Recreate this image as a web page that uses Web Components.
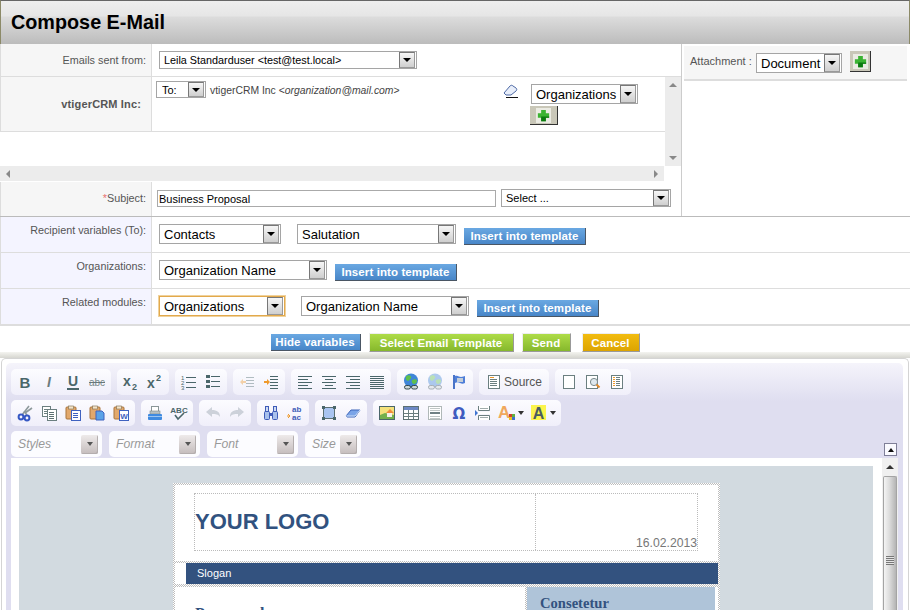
<!DOCTYPE html>
<html>
<head>
<meta charset="utf-8">
<title>Compose E-Mail</title>
<style>
  html, body { margin: 0; padding: 0; overflow: hidden; background: #fff; }
  body { font-family: "Liberation Sans", Arial, sans-serif; }
</style>
</head>
<body>
<compose-page></compose-page>

<script>
const SANS = "'Liberation Sans', Arial, sans-serif";
const DARK = '#4a666a';

const lines = (x, w, ys, color) => ys.map(y => `<rect x="${x}" y="${y}" width="${w}" height="1" fill="${color}"/>`).join('');
const page = (x, y, w, h, stroke) => `<rect x="${x}.5" y="${y}.5" width="${w}" height="${h}" fill="#fff" stroke="${stroke || '#6b7f80'}"/>`;
const clip = `<rect x="1" y="2" width="10" height="12" rx="1" fill="#e2a86c" stroke="#a8743c"/><rect x="3.5" y="1" width="5" height="3" fill="#f4e4c8" stroke="#8a7a5c" stroke-width=".7"/>`;

const ICONS = {
  bold: `<text x="8" y="13.5" text-anchor="middle" font-family="${SANS}" font-weight="700" font-size="15" fill="${DARK}">B</text>`,
  italic: `<text x="8" y="13" text-anchor="middle" font-family="${SANS}" font-style="italic" font-weight="700" font-size="14" fill="#6c7c7e">I</text>`,
  underline: `<text x="8" y="12" text-anchor="middle" font-family="${SANS}" font-weight="700" font-size="14" fill="${DARK}">U</text><rect x="2" y="14" width="12" height="2" fill="${DARK}"/>`,
  strike: `<text x="8" y="11.5" text-anchor="middle" font-family="${SANS}" font-size="10" fill="#78898b">abc</text><rect x="0" y="8" width="16" height="1" fill="#67787a"/>`,
  sub: `<text x="0" y="12" font-family="${SANS}" font-weight="700" font-size="14" fill="${DARK}">x</text><text x="9" y="15.5" font-family="${SANS}" font-weight="700" font-size="9" fill="${DARK}">2</text>`,
  sup: `<text x="0" y="14" font-family="${SANS}" font-weight="700" font-size="14" fill="${DARK}">x</text><text x="9" y="7" font-family="${SANS}" font-weight="700" font-size="9" fill="${DARK}">2</text>`,
  ol: `<text x="0" y="5.5" font-family="${SANS}" font-size="6" fill="${DARK}">1</text><text x="0" y="10.5" font-family="${SANS}" font-size="6" fill="${DARK}">2</text><text x="0" y="15.5" font-family="${SANS}" font-size="6" fill="${DARK}">3</text>` + lines(5, 10, [3, 8, 13], DARK),
  ul: `<rect x="1" y="1" width="4" height="3" fill="${DARK}"/><rect x="1" y="6" width="4" height="3" fill="${DARK}"/><rect x="1" y="11" width="4" height="3" fill="${DARK}"/>` + lines(6, 9, [2, 7, 12], DARK),
  outdent: lines(7, 8, [3, 6, 9, 12], DARK) + `<path d="M1 8l3-3v2h3v2H4v2z" fill="#ef9a2c"/>`,
  indent: lines(7, 8, [2, 5, 8, 11, 14], DARK) + `<path d="M7 8L4 5v2H1v2h3v2z" fill="#ef9a2c"/>`,
  left: lines(1, 14, [2, 8, 14], DARK) + lines(1, 10, [5, 11], DARK),
  center: lines(1, 14, [2, 8, 14], DARK) + lines(4, 8, [5, 11], DARK),
  right: lines(1, 14, [2, 8, 14], DARK) + lines(5, 10, [5, 11], DARK),
  justify: lines(1, 14, [2, 4, 6, 8, 10, 12, 14], DARK),
  link: `<circle cx="8" cy="6.5" r="7" fill="#3f86d8"/><path d="M3 2.5c2-2 4-1 5 0s-1 3-2 4-4 0-3-4zM9 6c2-1 5-1 5 1s-2 3-3 3-3-2-2-4z" fill="#5fc04c"/><rect x="1.5" y="11.5" width="6" height="3.5" rx="1.7" fill="#cfd8d8" stroke="#33484c"/><rect x="8.5" y="11.5" width="6" height="3.5" rx="1.7" fill="#cfd8d8" stroke="#33484c"/>`,
  anchor: `<rect x="2" y="1" width="2" height="14" fill="#4a74c8"/><path d="M4 2c3-1 4 1 6 1s3-1 4-1v7c-2 1-3 1-5 0s-3-1-5 0z" fill="#4f7fd8"/><path d="M6 4h6v4H6z" fill="#c4ced8"/>`,
  source: page(2, 1, 11, 13) + `<rect x="4" y="3" width="4" height="1" fill="#ef9a2c"/>` + lines(4, 7, [5, 7, 9, 11], '#6b7f80'),
  newpage: page(2, 1, 11, 13),
  preview: page(1, 1, 11, 13) + `<circle cx="9" cy="8" r="3.6" fill="#dfe8ee" stroke="#7a8a8c"/><path d="M11.5 10.5l3 3" stroke="#e08a2c" stroke-width="2"/>`,
  templates: page(2, 1, 11, 13) + lines(4, 2, [3, 5, 7, 9, 11], '#ef9a2c') + lines(7, 4, [3, 5, 7, 9, 11], '#6b7f80'),
  cut: `<path d="M5 10L12 1M10 10L7 6M8 8l7-5" stroke="#8e9a9c" stroke-width="1.6" fill="none"/><circle cx="4" cy="12" r="2.4" fill="none" stroke="#3658c4" stroke-width="2"/><circle cx="10" cy="13" r="2.4" fill="none" stroke="#3658c4" stroke-width="2"/>`,
  copy: page(1, 1, 8, 10) + lines(3, 4, [4, 6, 8], '#6b7f80') + page(6, 4, 9, 11) + lines(8, 5, [7, 9, 11, 13], '#5c7072'),
  paste: clip + page(6, 5, 9, 10, '#3f62c0') + lines(8, 5, [8, 10, 12], '#3f62c0'),
  pastetext: clip + `<path d="M7 6h6l2 2v7H7z" fill="#5aa2e8" stroke="#3f62c0"/>`,
  pasteword: clip + page(6, 5, 9, 10, '#3f62c0') + `<text x="11" y="14" text-anchor="middle" font-family="${SANS}" font-weight="700" font-size="8" fill="#3f62c0">W</text>`,
  print: `<rect x="4.5" y="1.5" width="7" height="6" fill="#fff" stroke="#8a9698"/><rect x="3" y="6" width="10" height="3" fill="#b8c0c4" stroke="#7a8688" stroke-width=".6"/><rect x="1" y="9" width="14" height="6" rx="1" fill="#3f8ae0"/><rect x="1" y="11" width="14" height="1" fill="#9cc4f0"/>`,
  spell: `<text x="8" y="8" text-anchor="middle" font-family="${SANS}" font-weight="700" font-size="8" fill="${DARK}">ABC</text><path d="M4 10l3 4 6-6" stroke="${DARK}" stroke-width="1.6" fill="none"/>`,
  undo: `<path d="M1 7l6-5v3c5 0 8 2 8 7-2-3-4-3-8-3v3z" fill="#8f9ba4"/>`,
  redo: `<path d="M15 7L9 2v3C4 5 1 7 1 12c2-3 4-3 8-3v3z" fill="#8f9ba4"/>`,
  find: `<rect x="1.5" y="6.5" width="5" height="8" rx="1" fill="#a8c0ec" stroke="#3f5cb8"/><rect x="9.5" y="6.5" width="5" height="8" rx="1" fill="#a8c0ec" stroke="#3f5cb8"/><rect x="2.5" y="1.5" width="3" height="5" fill="#cfdcf4" stroke="#3f5cb8"/><rect x="10.5" y="1.5" width="3" height="5" fill="#cfdcf4" stroke="#3f5cb8"/><rect x="6" y="8" width="4" height="3" fill="#3f5cb8"/>`,
  replace: `<text x="5" y="7" font-family="${SANS}" font-weight="700" font-size="8" fill="#3f5cb8">ab</text><text x="5" y="15" font-family="${SANS}" font-weight="700" font-size="8" fill="#3f5cb8">ac</text><path d="M0 11h3M1 9l2 2-2 2" stroke="#ef9a2c" fill="none"/>`,
  maximize: `<rect x="2.5" y="2.5" width="11" height="11" fill="#a9c4f0" stroke="#5c7072"/><rect x="1" y="1" width="3" height="3" fill="#4a666a"/><rect x="12" y="1" width="3" height="3" fill="#4a666a"/><rect x="1" y="12" width="3" height="3" fill="#4a666a"/><rect x="12" y="12" width="3" height="3" fill="#4a666a"/>`,
  eraser: `<path d="M1 11l5-6h9l-5 7H2z" fill="#7aa4e8" stroke="#3c64b8"/><path d="M1 11h9l5-6" stroke="#cfe0f8" fill="none"/>`,
  image: `<rect x=".5" y="1.5" width="15" height="13" fill="#f4e27c" stroke="#4a666a"/><path d="M1 10l5-2 9 2v4H1z" fill="#74b04c"/><path d="M7 8l4-4 4 4z" fill="#ef8a3c"/><rect x="8" y="8" width="5" height="4" fill="#f4f0e8"/>`,
  table: `<rect x=".5" y="1.5" width="15" height="13" fill="#fff" stroke="#5c7072"/><rect x="1" y="2" width="14" height="3" fill="#6c88c4"/>` + lines(1, 14, [8, 11], '#6b7f80') + `<rect x="5" y="5" width="1" height="9" fill="#6b7f80"/><rect x="10" y="5" width="1" height="9" fill="#6b7f80"/>`,
  hr: `<rect x="1.5" y="1.5" width="13" height="13" fill="#fff" stroke="#b0b8b8"/>` + lines(3, 10, [3, 5, 11, 13], '#c0c6c6') + `<rect x="3" y="7" width="10" height="2" fill="#708084"/>`,
  omega: `<text x="8" y="14" text-anchor="middle" font-family="'DejaVu Sans', sans-serif" font-weight="700" font-size="15" fill="#3f5cc0">Ω</text>`,
  pagebreak: `<path d="M3.5 1v4.5h11V1M3.5 15v-4.5h11V15" fill="#fff" stroke="#6b7f80"/>` + lines(5, 8, [3, 12], '#a0acac') + `<rect x="3" y="7" width="12" height="2" fill="#fff"/><path d="M0 5l3 3-3 3z" fill="#3f74d0"/>`,
  textcolor: `<text x="-1" y="13" font-family="${SANS}" font-weight="700" font-size="17" fill="#f0a85c">A</text><rect x="10" y="9" width="3" height="3" fill="#d04030"/><rect x="13" y="9" width="3" height="3" fill="#60b040"/><rect x="10" y="12" width="3" height="3" fill="#f0c020"/><rect x="13" y="12" width="3" height="3" fill="#3f70d0"/>`,
  bgcolor: `<rect x="0" y="0" width="15" height="15" fill="#fbf44c"/><text x="7.500" y="13.500" text-anchor="middle" font-family="${SANS}" font-weight="700" font-size="16" fill="#4a5c60">A</text>`,
  rubber: `<path d="M1 9l6-7c1-1 2-1 3 0l3 2c1 1 1 2 0 3L8 11H3z" fill="#e8eefa" stroke="#4c68a4"/><rect x="3" y="13" width="12" height="1" fill="#111"/>`,
  plus: `<rect x="0" y="0" width="16" height="16" fill="#f4f4ee" opacity=".8"/><path d="M5.5 2h5v3.500h3.500v5h-3.500V14h-5v-3.500H2v-5h3.500z" fill="#3bb332"/><path d="M5.500 9h8.500v1.500h-3.500V14h-5z" fill="#0c7a10"/>`
};

function svgIcon(name, size) {
  return `<svg xmlns="http://www.w3.org/2000/svg" width="${size}" height="${size}" viewBox="0 0 16 16" style="display:block;overflow:visible">${ICONS[name]}</svg>`;
}

class PageHeader extends HTMLElement {
  constructor() {
    super();
    this.attachShadow({mode: 'open'}).innerHTML = `
      <style>
        :host { display: block; height: 43px; border-top: 1px solid #666; border-left: 1px solid #8c8a68; border-right: 1px solid #8c8a68;
          background: linear-gradient(#eeeeee, #e6e6e6 15px, #dcdcdc 16px, #bcbcbc); }
        h1 { margin: 0; padding: 7px 0 0 10px; font: bold 19.8px/29px ${SANS}; color: #000; }
      </style>
      <h1><slot></slot></h1>`;
  }
}

class FakeSelect extends HTMLElement {
  constructor() {
    super();
    this.attachShadow({mode: 'open'}).innerHTML = `
      <style>
        :host { display: inline-flex; box-sizing: border-box; flex: none; height: 20px; border: 1px solid #a5a5a5; background: #fff;
          font: 13px ${SANS}; color: #000; align-items: center; padding: 0 0 0 4px; }
        :host([focused]) { border-color: #e2a94c; box-shadow: 0 0 0 1px #f0d29c; }
        .txt { flex: 1; white-space: nowrap; overflow: hidden; }
        .arrow { flex: none; align-self: stretch; width: 16px; margin: 0 1px 0 0; border: 1px solid #777; border-right-color: #999; border-bottom-color: #999; box-sizing: border-box;
          background: linear-gradient(#f6f6f6, #cfcfcf); display: flex; align-items: center; justify-content: center; }
        .arrow i { border: 4px solid transparent; border-top: 4px solid #000; border-bottom: 0; }
      </style>
      <span class="txt"><slot></slot></span><span class="arrow"><i></i></span>`;
  }
}

class BarBtn extends HTMLElement {
  constructor() {
    super();
    this.attachShadow({mode: 'open'}).innerHTML = `
      <style>
        :host { display: inline-flex; flex: none; box-sizing: border-box; height: 17px; align-items: center; justify-content: center;
          font: bold 11.5px ${SANS}; letter-spacing: .1px; color: #fff; white-space: nowrap;
          background: linear-gradient(#6aa8e2, #4886c8); border-right: 1px solid #4a5664; border-bottom: 1px solid #4a5664; }
        :host([kind=green]) { height: 19px; background: linear-gradient(#aedc48, #86b82c); border: 1px solid #eee; border-right-color: #999; border-bottom-color: #999; }
        :host([kind=orange]) { height: 19px; background: linear-gradient(#f2bc10, #dca400); border: 1px solid #eee; border-right-color: #999; border-bottom-color: #999; }
      </style>
      <slot></slot>`;
  }
}

class PlusBtn extends HTMLElement {
  constructor() {
    super();
    this.attachShadow({mode: 'open'}).innerHTML = `
      <style>
        :host { display: inline-flex; flex: none; box-sizing: border-box; width: 21px; height: 21px; align-items: center; justify-content: center;
          background: #c9c7b8; border-right: 1px solid #333; border-bottom: 1px solid #333; }
      </style>
      ${svgIcon('plus', 15)}`;
  }
}

class ThinScroll extends HTMLElement {
  constructor() {
    super();
    this.attachShadow({mode: 'open'}).innerHTML = `
      <style>
        :host { display: flex; flex: none; background: #ececec; align-items: center; justify-content: space-between; box-sizing: border-box; }
        :host([dir=h]) { height: 15px; padding: 0 6px; }
        :host([dir=v]) { width: 16px; flex-direction: column; padding: 6px 0; }
        i { display: block; border: 4px solid transparent; }
        :host([dir=h]) .a { border-left: 0; border-right-color: #888; }
        :host([dir=h]) .b { border-right: 0; border-left-color: #888; }
        :host([dir=v]) .a { border-top: 0; border-bottom-color: #888; }
        :host([dir=v]) .b { border-bottom: 0; border-top-color: #888; }
      </style>
      <i class="a"></i><i class="b"></i>`;
  }
}

// label cell + field cell, shared by all rows of the form
class FormRow extends HTMLElement {
  constructor() {
    super();
    this.attachShadow({mode: 'open'}).innerHTML = `
      <style>
        :host { display: grid; grid-template-columns: 152px 1fr; box-sizing: border-box; border-bottom: var(--row-border, 1px solid #ddd); font: 10.8px ${SANS}; }
        .label { box-sizing: border-box; background: var(--label-bg, #f6f6f6); border-left: 1px solid #ddd; border-right: 1px solid #ddd;
          text-align: right; color: #555; line-height: 14px; padding: var(--label-pad, 9px 5px 0 0); }
        .field { display: flex; align-items: flex-start; padding: var(--field-pad, 7px 0 0 7px); min-width: 0; }
      </style>
      <div class="label"><slot name="label"></slot></div>
      <div class="field"><slot></slot></div>`;
  }
}

class ComposeTop extends HTMLElement {
  constructor() {
    super();
    this.attachShadow({mode: 'open'}).innerHTML = `
      <style>
        :host { display: flex; height: 172px; border-bottom: 1px solid #bbb; }
        .left { box-sizing: border-box; width: 682px; flex: none; border-right: 1px solid #ccc; }
        .from { height: 33px; }
        .scroller { display: grid; grid-template-columns: 665px 16px; grid-template-rows: 89px 16px; height: 105px; }
        .inner { overflow: hidden; }
        .to { height: 55px; --label-pad: 20px 10px 0 0; --field-pad: 4px 0 0 4px; }
        .to b { color: #555; font-size: 11px; letter-spacing: .15px; }
        .addr { width: 297px; flex: none; box-sizing: border-box; padding: 3px 0 0 4px; font-size: 10.4px; line-height: 13px; color: #444; white-space: nowrap; }
        .rubber { flex: none; width: 28px; padding-top: 3px; }
        .pick { display: flex; flex-direction: column; align-items: flex-start; padding-top: 3px; }
        .pick plus-btn { width: 28px; height: 19px; margin: 2px 0 0 -1px; }
        .hs { grid-column: 1; height: 15px; margin-right: 1px; }
        .subject { height: 34px; --field-pad: 8px 0 0 5px; --label-pad: 9px 5px 0 0; border-bottom: 0; }
        .subject em { color: #e87070; font-style: normal; }
        .input { box-sizing: border-box; width: 339px; height: 17px; border: 1px solid #aaa; font-size: 11px; line-height: 16px; padding-left: 1px; color: #000; }
        .subject fake-select { width: 170px; height: 18px; margin: -1px 0 0 5px; font-size: 11px; }
        .right { flex: 1; padding: 2px 3px 0 2px; }
        .attach { display: flex; align-items: flex-start; box-sizing: border-box; height: 35px; background: #f6f6f6; border-bottom: 2px solid #ddd; padding: 5px 0 0 6px; font: 11px ${SANS}; color: #555; }
        .attach span { padding-top: 4px; width: 66px; flex: none; }
        .attach fake-select { width: 86px; margin-top: 2px; }
        .attach plus-btn { margin: 0 0 0 8px; }
        .from fake-select { width: 258px; height: 18px; font-size: 10.8px; }
        .to fake-select.rcpt { width: 50px; height: 17px; font-size: 11px; padding-left: 5px; }
        .pick fake-select { width: 107px; }
      </style>
      <div class="left">
        <form-row class="from"><span slot="label">Emails sent from:</span><fake-select>Leila Standarduser &lt;test@test.local&gt;</fake-select></form-row>
        <div class="scroller">
          <div class="inner">
            <form-row class="to">
              <b slot="label">vtigerCRM Inc:</b>
              <fake-select class="rcpt">To:</fake-select>
              <div class="addr">vtigerCRM Inc &lt;<i>organization@mail.com</i>&gt;</div>
              <div class="rubber">${svgIcon('rubber', 16)}</div>
              <div class="pick"><fake-select>Organizations</fake-select><plus-btn></plus-btn></div>
            </form-row>
          </div>
          <thin-scroll dir="v"></thin-scroll>
          <thin-scroll dir="h" class="hs"></thin-scroll>
        </div>
        <form-row class="subject">
          <span slot="label"><em>*</em>Subject:</span>
          <div class="input">Business Proposal</div>
          <fake-select>Select ...</fake-select>
        </form-row>
      </div>
      <div class="right">
        <div class="attach"><span>Attachment :</span><fake-select>Document</fake-select><plus-btn></plus-btn></div>
      </div>`;
  }
}

class VariableRows extends HTMLElement {
  constructor() {
    super();
    this.attachShadow({mode: 'open'}).innerHTML = `
      <style>
        :host { display: block; --label-bg: #f4f4ff; --label-pad: 6px 5px 0 0; }
        form-row { height: 36px; }
        form-row:last-child { --row-border: 2px solid #ddd; height: 37px; }
        fake-select { margin-right: 16px; }
        bar-btn { width: 122px; margin: 4px 0 0 -8px; }
      </style>
      <form-row>
        <span slot="label">Recipient variables (To):</span>
        <fake-select style="width:122px">Contacts</fake-select>
        <fake-select style="width:159px">Salutation</fake-select>
        <bar-btn>Insert into template</bar-btn>
      </form-row>
      <form-row>
        <span slot="label">Organizations:</span>
        <fake-select style="width:168px">Organization Name</fake-select>
        <bar-btn>Insert into template</bar-btn>
      </form-row>
      <form-row>
        <span slot="label">Related modules:</span>
        <fake-select style="width:126px" focused>Organizations</fake-select>
        <fake-select style="width:168px">Organization Name</fake-select>
        <bar-btn>Insert into template</bar-btn>
      </form-row>`;
  }
}

class ActionBar extends HTMLElement {
  constructor() {
    super();
    this.attachShadow({mode: 'open'}).innerHTML = `
      <style>
        :host { display: flex; justify-content: center; align-items: flex-start; gap: 8px; height: 26px; box-sizing: border-box; padding-top: 7px; }
        .hide { margin-top: 1px; }
      </style>
      <bar-btn class="hide" style="width:90px">Hide variables</bar-btn>
      <bar-btn kind="green" style="width:145px">Select Email Template</bar-btn>
      <bar-btn kind="green" style="width:49px">Send</bar-btn>
      <bar-btn kind="orange" style="width:58px;margin-left:3px">Cancel</bar-btn>`;
  }
}

class ToolGroup extends HTMLElement {
  constructor() {
    super();
    this.attachShadow({mode: 'open'}).innerHTML = `
      <style>
        :host { display: flex; flex: none; height: 26px; padding: 0 2px; border-radius: 5px; align-items: center;
          background: linear-gradient(#fcfcff, #f0effa); }
      </style>
      <slot></slot>`;
  }
}

class ToolBtn extends HTMLElement {
  constructor() {
    super();
    const name = this.getAttribute('icon');
    const arrow = this.hasAttribute('arrow') ? '<i></i>' : '';
    this.attachShadow({mode: 'open'}).innerHTML = `
      <style>
        :host { display: flex; flex: none; width: 24px; height: 26px; align-items: center; justify-content: center; font: 12px ${SANS}; color: #555; }
        :host([arrow]) { width: 32px; }
        :host([off]) svg { opacity: .4; }
        :host([wide]) { width: auto; gap: 2px; padding: 0 5px; }
        i { display: block; margin-left: 3px; border: 3.5px solid transparent; border-top: 4px solid #333; border-bottom: 0; }
      </style>
      ${svgIcon(name, 16)}${arrow}<slot></slot>`;
  }
}

class ToolCombo extends HTMLElement {
  constructor() {
    super();
    this.attachShadow({mode: 'open'}).innerHTML = `
      <style>
        :host { display: flex; flex: none; box-sizing: border-box; width: 91px; height: 26px; padding: 0 4px 0 7px; align-items: center; justify-content: space-between;
          background: #fcfcff; border-radius: 5px; font: italic 12.2px ${SANS}; color: #999; }
        .drop { width: 17px; height: 19px; border-radius: 2px; background: linear-gradient(#eeeaea, #c4bcbc); display: flex; align-items: center; justify-content: center;
          box-shadow: inset -1px -1px 0 #b4aeae; }
        .drop i { border: 3.5px solid transparent; border-top: 4px solid #555; border-bottom: 0; }
      </style>
      <slot></slot><span class="drop"><i></i></span>`;
  }
}

class EditorPane extends HTMLElement {
  constructor() {
    super();
    const btns = names => names.split(' ').map(n => {
      const off = n.endsWith('!');
      return `<tool-btn icon="${n.replace('!', '')}"${off ? ' off' : ''}></tool-btn>`;
    }).join('');
    const group = names => `<tool-group>${btns(names)}</tool-group>`;
    this.attachShadow({mode: 'open'}).innerHTML = `
      <style>
        :host { display: block; box-sizing: border-box; margin-left: 1px; width: 908px; height: 258px; border: 1px solid #d4d4d4; border-bottom: 0; border-radius: 5px 5px 0 0;
          padding: 4px 5px 0 4px; overflow: hidden; background: #fff; }
        .skin { height: 100%; border-radius: 5px 5px 0 0; background: linear-gradient(#f5f4fb, #dfdef0 38px); padding: 6px 5px 0; box-sizing: border-box; display: flex; flex-direction: column; }
        .row { display: flex; gap: 6px; margin-bottom: 5px; flex: none; }
        .row.last { gap: 7px; margin-bottom: 1px; }
        .collapse { margin: auto 1px 1px auto; width: 13px; height: 13px; box-sizing: border-box; border: 1px solid #7f7f98; background: #fafaff; display: flex; align-items: center; justify-content: center; }
        .collapse i { border: 3.5px solid transparent; border-bottom: 4px solid #111; border-top: 0; }
        .body { flex: 1; min-height: 0; display: flex; overflow: hidden; background: #fff; }
        .doc { flex: 1; min-width: 0; padding: 8px 9px 0 8px; overflow: hidden; }
        .bar { flex: none; width: 16px; background: #f0f0f0; display: flex; flex-direction: column; }
        .up { height: 18px; flex: none; display: flex; align-items: center; justify-content: center; }
        .up i { border: 4px solid transparent; border-bottom: 4px solid #333; border-top: 0; }
        .thumb { flex: 1; box-sizing: border-box; margin-left: 1px; width: 14px; border: 1px solid #a4a4a4; border-bottom: 0; border-radius: 2px 2px 0 0;
          background: linear-gradient(90deg, #f4f4f4, #dcdcdc 45%, #b4b4b4); padding-top: 79px; }
        .grip { height: 9px; margin: 0 2px; background: repeating-linear-gradient(#777 0 1px, #e4e4e4 1px 2px); }
      </style>
      <div class="skin">
        <div class="row">
          ${group('bold italic underline strike')}${group('sub sup')}${group('ol ul')}${group('outdent! indent')}${group('left center right justify')}${group('link unlink anchor').replace('icon="unlink"', 'icon="link" off')}
          <tool-group><tool-btn icon="source" wide>Source</tool-btn></tool-group>
          ${group('newpage preview templates')}
        </div>
        <div class="row">
          ${group('cut copy paste pastetext pasteword')}${group('print spell')}${group('undo! redo!')}${group('find replace')}${group('maximize eraser')}
          <tool-group>${btns('image table hr omega pagebreak')}<tool-btn icon="textcolor" arrow></tool-btn><tool-btn icon="bgcolor" arrow></tool-btn></tool-group>
        </div>
        <div class="row last">
          <tool-combo>Styles</tool-combo><tool-combo>Format</tool-combo><tool-combo>Font</tool-combo><tool-combo style="width:56px">Size</tool-combo>
          <div class="collapse"><i></i></div>
        </div>
        <div class="body">
          <div class="doc"><email-template></email-template></div>
          <div class="bar"><div class="up"><i></i></div><div class="thumb"><div class="grip"></div></div></div>
        </div>
      </div>`;
  }
}

// sample newsletter that sits inside the editor
class EmailTemplate extends HTMLElement {
  constructor() {
    super();
    this.attachShadow({mode: 'open'}).innerHTML = `
      <style>
        :host { display: block; background: #d2dae0; padding: 17px 0 0; height: 200px; font-family: ${SANS}; }
        .sheet { width: 547px; margin: 0 0 0 154px; }
        .st { background: repeating-conic-gradient(#bdbdbd 0 25%, #fff 0 50%) 0 0 / 2px 2px; }
        .top { padding: 2px 2px 0; }
        .top > div { background: #fff; padding: 8px 20px 10px 19px; }
        .cells { display: grid; grid-template-columns: 341px 161px; height: 58px; box-sizing: border-box; border: 1px dotted #bbb; }
        .logo { font: bold 22px/1 ${SANS}; color: #31527f; display: flex; align-items: center; border-right: 1px dotted #bbb; }
        .date { font-size: 12.2px; color: #777; text-align: right; align-self: end; line-height: 14px; }
        .slogan { padding: 2px 2px 3px; }
        .slogan > div { background: #fff; padding-left: 11px; }
        .slogan p { margin: 0; height: 21px; background: #33527f; color: #fff; font-size: 11px; line-height: 21px; padding-left: 11px; }
        .main { padding: 0 2px; height: 60px; }
        .main > div { background: #fff; display: grid; grid-template-columns: 350px 2px 188px 3px; height: 100%; }
        .main h2 { margin: 0; padding: 17px 0 0 20px; font: bold 16px/20px "Liberation Serif", serif; color: #33527f; }
        .side { background: #afc4d9; padding: 9px 0 0 13px; font: bold 14.6px/14px "Liberation Serif", serif; color: #33527f; }
      </style>
      <div class="sheet">
        <div class="st top"><div><div class="cells"><div class="logo">YOUR LOGO</div><div class="date">16.02.2013</div></div></div></div>
        <div class="st slogan"><div><p>Slogan</p></div></div>
        <div class="st main"><div><h2>Paragraph</h2><span class="st"></span><div class="side">Consetetur</div><span></span></div></div>
      </div>`;
  }
}

class ComposePage extends HTMLElement {
  constructor() {
    super();
    this.attachShadow({mode: 'open'}).innerHTML = `
      <style>
        :host { display: block; width: 910px; height: 610px; overflow: hidden; }
        .band { height: 6px; background: linear-gradient(#f4f4f0, #d6d6d0); }
      </style>
      <page-header>Compose E-Mail</page-header>
      <compose-top></compose-top>
      <variable-rows></variable-rows>
      <action-bar></action-bar>
      <div class="band"></div>
      <editor-pane></editor-pane>`;
  }
}

customElements.define('page-header', PageHeader);
customElements.define('fake-select', FakeSelect);
customElements.define('bar-btn', BarBtn);
customElements.define('plus-btn', PlusBtn);
customElements.define('thin-scroll', ThinScroll);
customElements.define('form-row', FormRow);
customElements.define('tool-group', ToolGroup);
customElements.define('tool-btn', ToolBtn);
customElements.define('tool-combo', ToolCombo);
customElements.define('email-template', EmailTemplate);
customElements.define('compose-top', ComposeTop);
customElements.define('variable-rows', VariableRows);
customElements.define('action-bar', ActionBar);
customElements.define('editor-pane', EditorPane);
customElements.define('compose-page', ComposePage);
</script>
</body>
</html>
